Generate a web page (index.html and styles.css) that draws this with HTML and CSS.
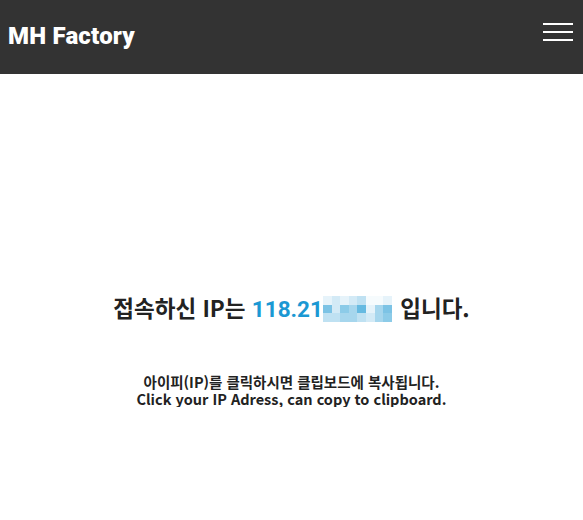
FILE: index.html
```html
<!DOCTYPE html>
<html lang="ko">
<head>
  <meta charset="UTF-8" />
  <meta name="viewport" content="width=device-width, initial-scale=1.0"/>
  <title>MH Factory - IP</title>
  <link rel="stylesheet" href="styles.css">
</head>
<body>

  <header class="topbar">
    <a class="brand" href="#">MH Factory</a>
    <button class="menu-btn" aria-label="menu">
      <span></span><span></span><span></span>
    </button>
  </header>

  <main class="content">
    <h2 class="ip-line">
      접속하신 IP는
      <span class="ip" id="ip">118.21<span class="mosaic">
        <i class="c1"></i><i class="c2"></i><i class="c1"></i><i class="c2"></i><i class="c3"></i><i class="c0"></i><i class="c0"></i><i class="c1"></i>
        <i class="c6"></i><i class="c2"></i><i class="c5"></i><i class="c4"></i><i class="c7"></i><i class="c1"></i><i class="c4"></i><i class="c6"></i>
        <i class="c3"></i><i class="c3"></i><i class="c4"></i><i class="c4"></i><i class="c3"></i><i class="c2"></i><i class="c4"></i><i class="c5"></i>
      </span></span>
      입니다.
    </h2>
    <p class="hint">
      아이피(IP)를 클릭하시면 클립보드에 복사됩니다.<br>
      Click your IP Adress, can copy to clipboard.
    </p>
  </main>

</body>
</html>
```

FILE: styles.css
```css
:root {
  --bar: #333333;
  --ink: #222222;
  --ip: #1b98d3;
}

body {
  margin: 0;
  font-family: "Noto Sans CJK KR", "Noto Sans", sans-serif;
  color: var(--ink);
  background: #ffffff;
}

.topbar {
  height: 74px;
  background-color: var(--bar);
  display: flex;
  align-items: center;
  justify-content: space-between;
  padding: 0 10px 0 8px;
}

.brand {
  font-family: Roboto, "Liberation Sans", sans-serif;
  font-weight: 900;
  font-size: 24px;
  letter-spacing: 0.2px;
  color: #ffffff;
  text-decoration: none;
  margin-top: -2px;
}

.menu-btn {
  width: 30px;
  height: 18px;
  padding: 0;
  margin-top: -10px;
  background: none;
  border: none;
  display: flex;
  flex-direction: column;
  justify-content: space-between;
  cursor: pointer;
}

.menu-btn span {
  display: block;
  height: 2px;
  background: #ffffff;
}

.content {
  text-align: center;
  padding-top: 218px;
}

.ip-line {
  margin: 0;
  font-size: 22.5px;
  font-weight: 700;
  line-height: 30px;
}

.ip {
  color: var(--ip);
  font-family: Roboto, "Noto Sans", sans-serif;
  font-size: 22.5px;
  cursor: pointer;
}

.mosaic {
  display: inline-grid;
  grid-template-columns: repeat(8, 1fr);
  grid-template-rows: repeat(3, 1fr);
  width: 69px;
  height: 26px;
  vertical-align: middle;
  margin-right: 2px;
  margin-top: -4px;
}

.mosaic i { display: block; }
.mosaic .c0 { background: #f6fbfd; }
.mosaic .c1 { background: #e6f3fa; }
.mosaic .c2 { background: #d3eaf6; }
.mosaic .c3 { background: #bfe1f2; }
.mosaic .c4 { background: #a6d6ed; }
.mosaic .c5 { background: #8ccbe8; }
.mosaic .c6 { background: #7cc3e5; }
.mosaic .c7 { background: #66bae1; }

.hint {
  margin: 49px 0 0;
  font-size: 14.5px;
  font-weight: 700;
  line-height: 17px;
}
```
